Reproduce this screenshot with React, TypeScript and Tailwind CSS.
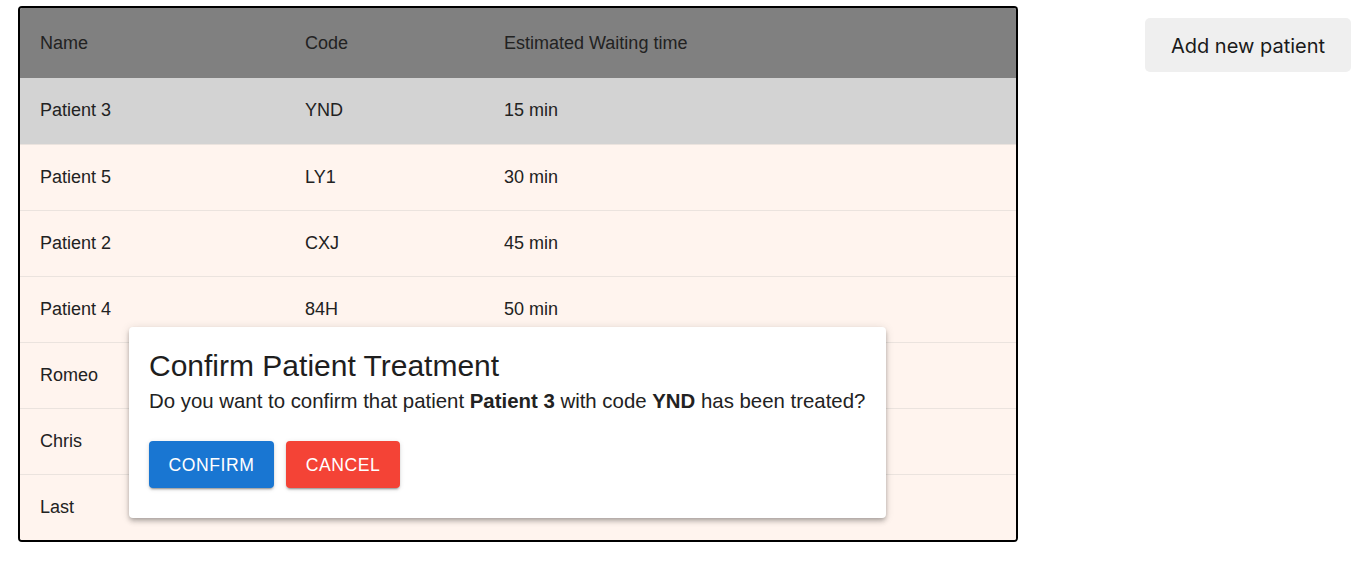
const patients = [
  { name: "Patient 3", code: "YND", wait: "15 min" },
  { name: "Patient 5", code: "LY1", wait: "30 min" },
  { name: "Patient 2", code: "CXJ", wait: "45 min" },
  { name: "Patient 4", code: "84H", wait: "50 min" },
  { name: "Romeo", code: "", wait: "" },
  { name: "Chris", code: "", wait: "" },
  { name: "Last", code: "", wait: "" },
];

export default function App() {
  return (
    <div className="relative min-h-[588px] bg-white font-['Liberation_Sans',Arial,sans-serif] text-[#222]">
      <div className="flex items-start">
        {/* Queue table */}
        <div className="ml-[18px] mt-[6px] w-[1000px] overflow-hidden rounded-[4px] border-2 border-black">
          <table className="w-full table-fixed border-collapse text-left text-[18px]">
            <colgroup>
              <col className="w-[285px]" />
              <col className="w-[199px]" />
              <col />
            </colgroup>
            <thead>
              <tr className="h-[70px] bg-[#808080]">
                <th className="pl-[20px] font-normal">Name</th>
                <th className="font-normal">Code</th>
                <th className="font-normal">Estimated Waiting time</th>
              </tr>
            </thead>
            <tbody>
              {patients.map((p, i) => (
                <tr
                  key={p.name}
                  className={
                    i === 0
                      ? "h-[66px] bg-[#d3d3d3]"
                      : "h-[66px] border-t border-[#ebe3de] bg-[#fff4ee]"
                  }
                >
                  <td className="pl-[20px]">{p.name}</td>
                  <td>{p.code}</td>
                  <td>{p.wait}</td>
                </tr>
              ))}
            </tbody>
          </table>
        </div>

        <button className="ml-[127px] mt-[18px] h-[54px] w-[206px] rounded-[5px] bg-[#efefef] pt-[2px] font-['Inter',sans-serif] text-[20px] text-[#1a1a1a]">
          Add new patient
        </button>
      </div>

      {/* Confirm dialog */}
      <div className="absolute left-[129px] top-[327px] w-[757px] rounded-[4px] bg-white px-[20px] pb-[30px] pt-[19px] shadow-[0_2px_4px_-1px_rgba(0,0,0,0.2),0_4px_5px_0_rgba(0,0,0,0.14),0_1px_10px_0_rgba(0,0,0,0.12)]">
        <h2 className="text-[30px] leading-[40px] text-[#1e1e1e]">Confirm Patient Treatment</h2>
        <p className="whitespace-nowrap text-[20.4px] leading-[30px] text-[#222]">
          Do you want to confirm that patient <b>Patient 3</b> with code <b>YND</b> has been treated?
        </p>
        <div className="mt-[25px] flex gap-[12px]">
          <button className="h-[47px] w-[125px] rounded-[4px] bg-[#1976d2] pt-[1px] text-[17.6px] tracking-[0.03em] text-white shadow-[0_3px_1px_-2px_rgba(0,0,0,0.2),0_2px_2px_0_rgba(0,0,0,0.14),0_1px_5px_0_rgba(0,0,0,0.12)]">
            CONFIRM
          </button>
          <button className="h-[47px] w-[114px] rounded-[4px] bg-[#f44336] pt-[1px] text-[17.6px] tracking-[0.03em] text-white shadow-[0_3px_1px_-2px_rgba(0,0,0,0.2),0_2px_2px_0_rgba(0,0,0,0.14),0_1px_5px_0_rgba(0,0,0,0.12)]">
            CANCEL
          </button>
        </div>
      </div>
    </div>
  );
}
